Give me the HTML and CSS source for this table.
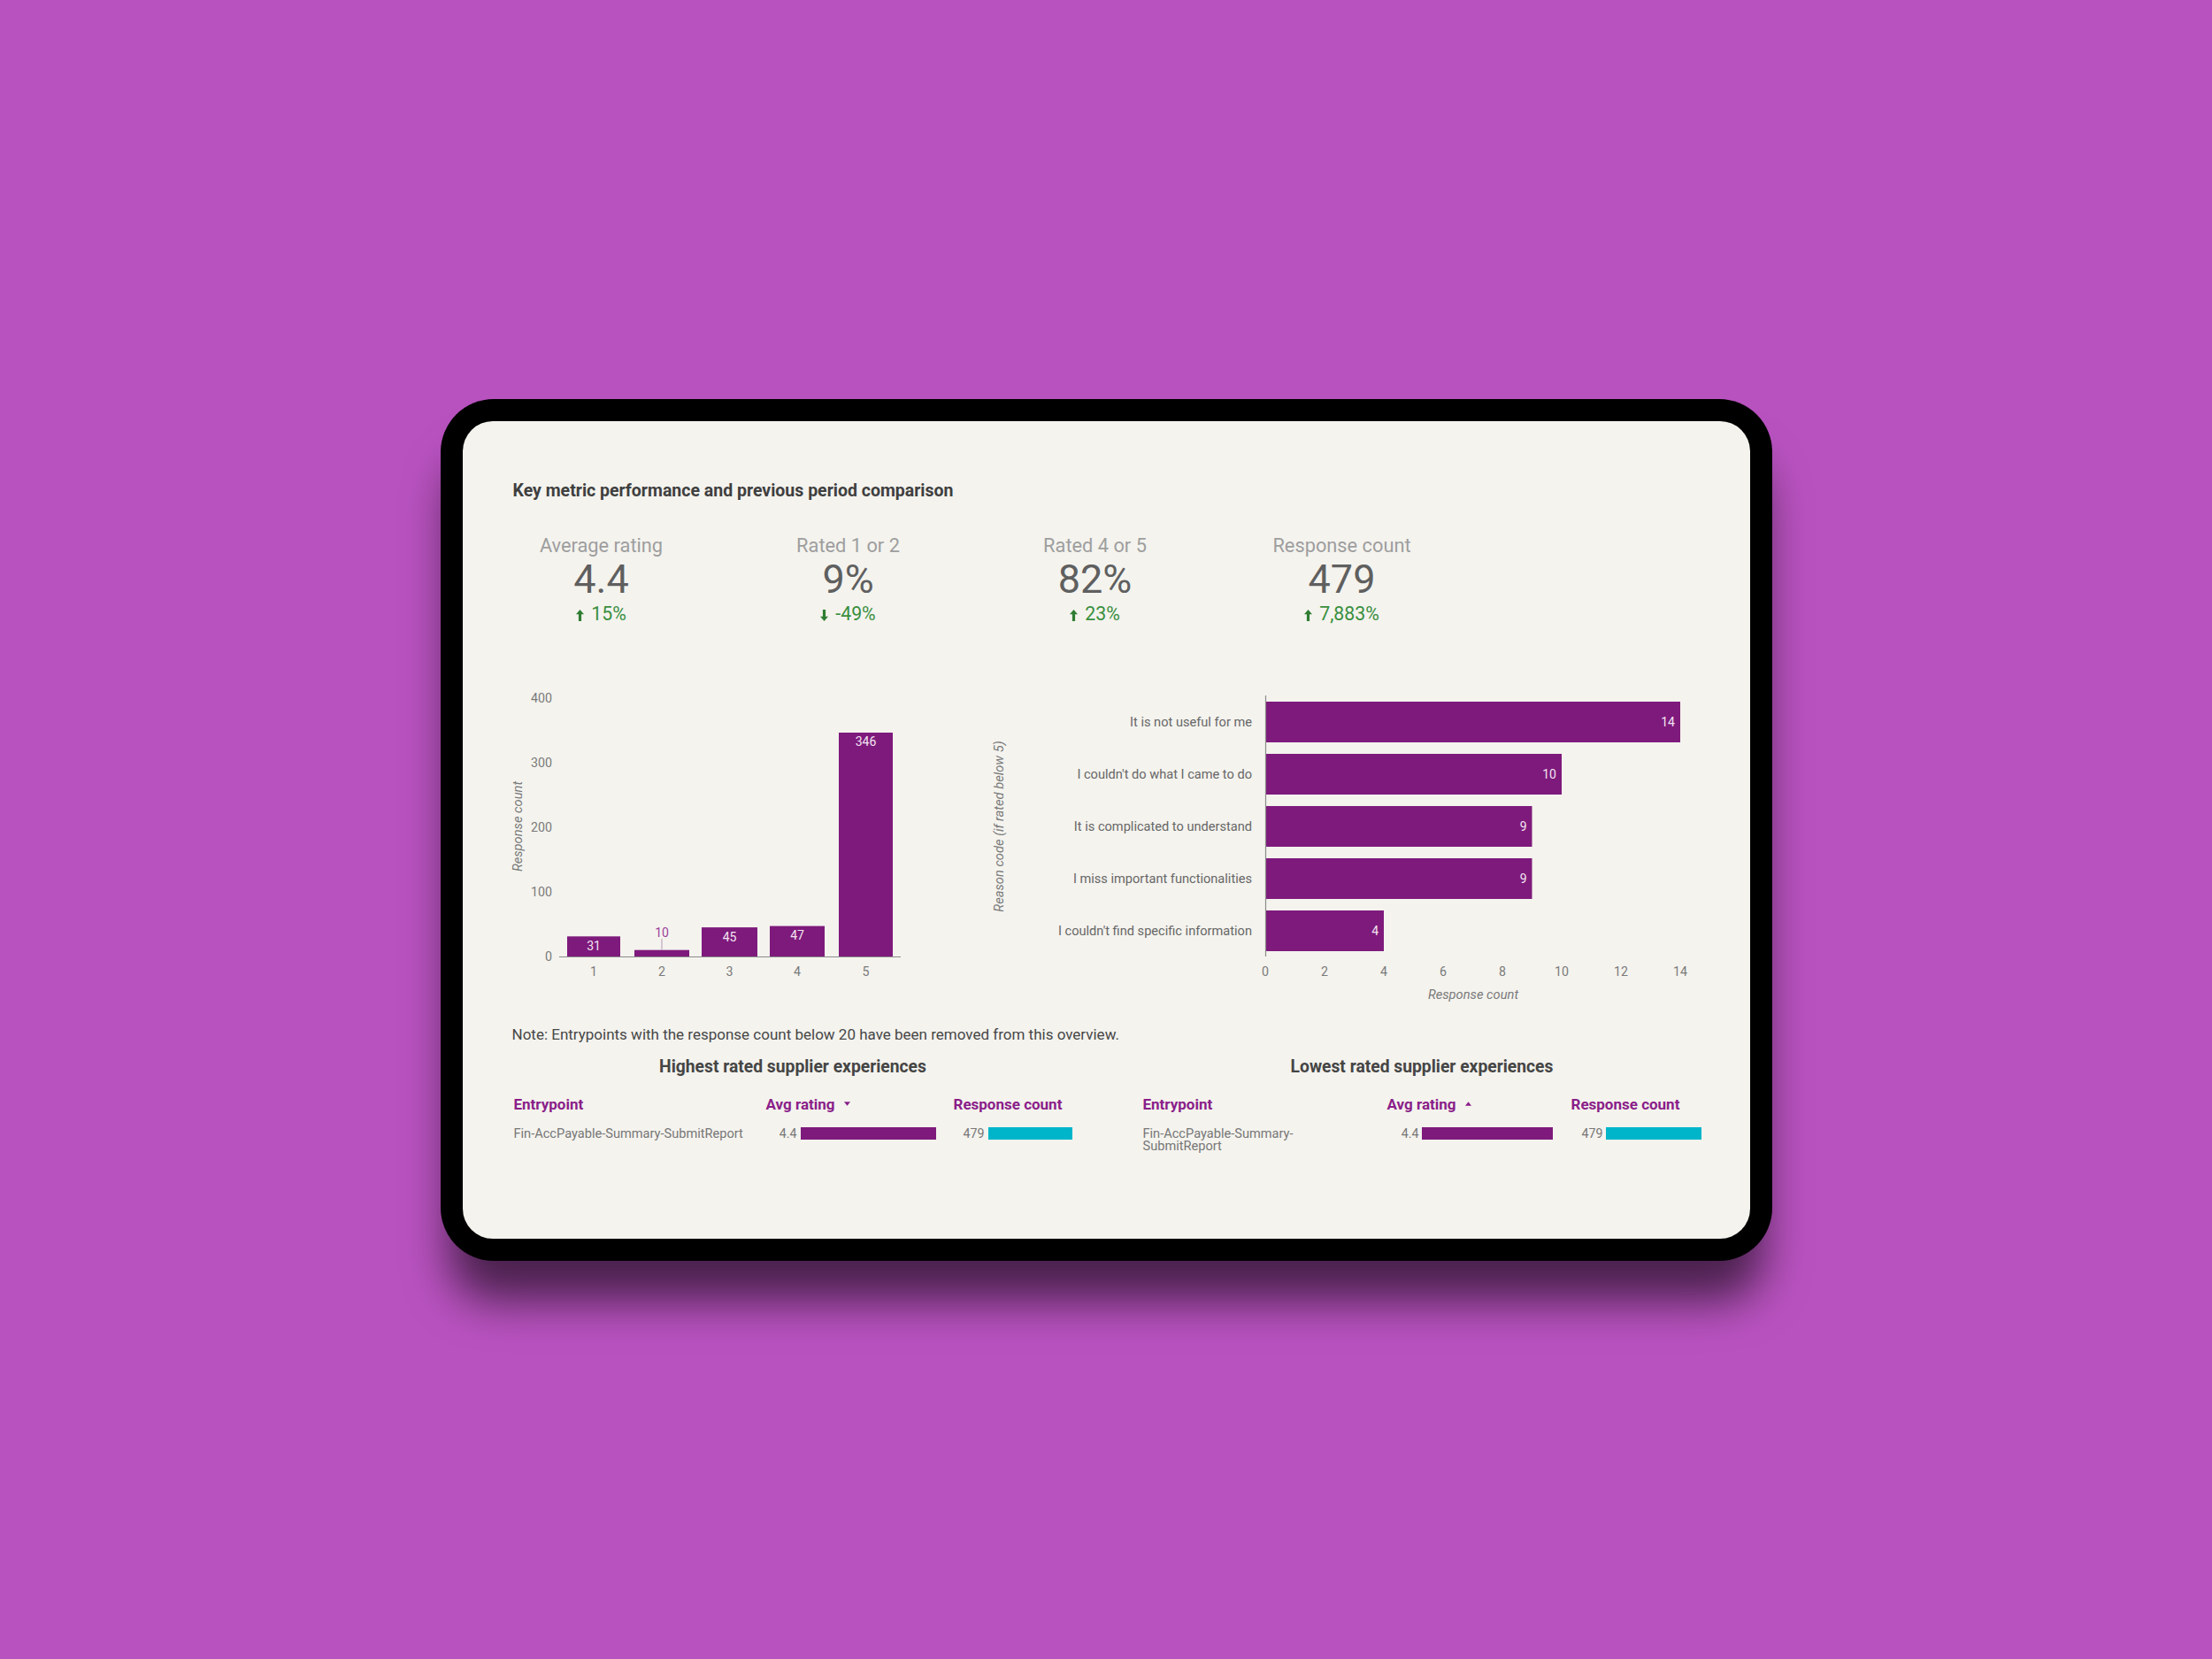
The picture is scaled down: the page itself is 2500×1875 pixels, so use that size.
FILE: index.html
```html
<!DOCTYPE html>
<html lang="en">
<head>
<meta charset="utf-8">
<title>Supplier experience dashboard</title>
<link rel="stylesheet" href="styles.css">
</head>
<body>
<div class="tablet">
  <div class="screen">
    <h1 class="title">Key metric performance and previous period comparison</h1>

    <div class="kpis">
      <div class="kpi">
        <div class="kpi-label">Average rating</div>
        <div class="kpi-value">4.4</div>
        <div class="kpi-delta"><svg class="arrow" viewBox="0 0 9 13"><path d="M4.5 0 L9 5.2 H6.1 V13 H2.9 V5.2 H0 Z"/></svg><span>15%</span></div>
      </div>
      <div class="kpi">
        <div class="kpi-label">Rated 1 or 2</div>
        <div class="kpi-value">9%</div>
        <div class="kpi-delta"><svg class="arrow" viewBox="0 0 9 13"><path d="M4.5 13 L9 7.8 H6.1 V0 H2.9 V7.8 H0 Z"/></svg><span>-49%</span></div>
      </div>
      <div class="kpi">
        <div class="kpi-label">Rated 4 or 5</div>
        <div class="kpi-value">82%</div>
        <div class="kpi-delta"><svg class="arrow" viewBox="0 0 9 13"><path d="M4.5 0 L9 5.2 H6.1 V13 H2.9 V5.2 H0 Z"/></svg><span>23%</span></div>
      </div>
      <div class="kpi">
        <div class="kpi-label">Response count</div>
        <div class="kpi-value">479</div>
        <div class="kpi-delta"><svg class="arrow" viewBox="0 0 9 13"><path d="M4.5 0 L9 5.2 H6.1 V13 H2.9 V5.2 H0 Z"/></svg><span>7,883%</span></div>
      </div>
    </div>

    <div class="charts">
      <svg class="chart chart-left" width="460" height="345" viewBox="0 0 460 345">
        <text class="axis-title" transform="translate(15,163) rotate(-90)" text-anchor="middle" dominant-baseline="central">Response count</text>
        <g class="tick" text-anchor="end" dominant-baseline="central">
          <text x="54" y="17.6">400</text>
          <text x="54" y="90.7">300</text>
          <text x="54" y="163.8">200</text>
          <text x="54" y="236.9">100</text>
          <text x="54" y="310">0</text>
        </g>
        <g class="bar">
          <rect x="71" y="287.3" width="60" height="22.7"/>
          <rect x="147" y="302.7" width="62" height="7.3"/>
          <rect x="223" y="277.1" width="63" height="32.9"/>
          <rect x="300" y="275.6" width="62" height="34.4"/>
          <rect x="378" y="57" width="61" height="253"/>
        </g>
        <line class="axis-line" x1="62" y1="310.5" x2="448" y2="310.5"/>
        <line class="leader" x1="178" y1="290" x2="178" y2="302.7"/>
        <g class="bar-value" text-anchor="middle" dominant-baseline="central">
          <text x="101" y="297.5">31</text>
          <text x="254.5" y="287.5">45</text>
          <text x="331" y="286">47</text>
          <text x="408.5" y="66.5">346</text>
        </g>
        <text class="bar-value-out" x="178" y="283" text-anchor="middle" dominant-baseline="central">10</text>
        <g class="tick" text-anchor="middle" dominant-baseline="central">
          <text x="101" y="327">1</text>
          <text x="178" y="327">2</text>
          <text x="254.5" y="327">3</text>
          <text x="331" y="327">4</text>
          <text x="408.5" y="327">5</text>
        </g>
      </svg>

      <svg class="chart chart-right" width="810" height="365" viewBox="0 0 810 365">
        <text class="axis-title" transform="translate(19,163) rotate(-90)" text-anchor="middle" dominant-baseline="central">Reason code (if rated below 5)</text>
        <g class="category" text-anchor="end" dominant-baseline="central">
          <text x="305" y="45">It is not useful for me</text>
          <text x="305" y="104">I couldn't do what I came to do</text>
          <text x="305" y="163">It is complicated to understand</text>
          <text x="305" y="222">I miss important functionalities</text>
          <text x="305" y="281">I couldn't find specific information</text>
        </g>
        <g class="bar">
          <rect x="321" y="22" width="468" height="46"/>
          <rect x="321" y="81" width="334" height="46"/>
          <rect x="321" y="140" width="300.5" height="46"/>
          <rect x="321" y="199" width="300.5" height="46"/>
          <rect x="321" y="258" width="133" height="46"/>
        </g>
        <line class="axis-line" x1="320.5" y1="15" x2="320.5" y2="310"/>
        <g class="bar-value" text-anchor="end" dominant-baseline="central">
          <text x="783" y="45">14</text>
          <text x="649" y="104">10</text>
          <text x="615.5" y="163">9</text>
          <text x="615.5" y="222">9</text>
          <text x="448" y="281">4</text>
        </g>
        <g class="tick" text-anchor="middle" dominant-baseline="central">
          <text x="320" y="327">0</text>
          <text x="387" y="327">2</text>
          <text x="454" y="327">4</text>
          <text x="521" y="327">6</text>
          <text x="588" y="327">8</text>
          <text x="655" y="327">10</text>
          <text x="722" y="327">12</text>
          <text x="789" y="327">14</text>
        </g>
        <text class="axis-title" x="555" y="353" text-anchor="middle" dominant-baseline="central">Response count</text>
      </svg>
    </div>

    <p class="note">Note: Entrypoints with the response count below 20 have been removed from this overview.</p>

    <div class="tables">
      <section class="table-block">
        <h2 class="table-title">Highest rated supplier experiences</h2>
        <div class="table table-high">
          <div class="th">Entrypoint</div>
          <div class="th">Avg rating<svg class="caret" viewBox="0 0 8 5"><path d="M0 0 H8 L4 5 Z"/></svg></div>
          <div class="th">Response count</div>
          <div class="td entry">Fin-AccPayable-Summary-SubmitReport</div>
          <div class="td metric"><span class="num">4.4</span><span class="bar-fill purple" style="width:153px"></span></div>
          <div class="td metric"><span class="num">479</span><span class="bar-fill cyan" style="width:95px"></span></div>
        </div>
      </section>
      <section class="table-block">
        <h2 class="table-title">Lowest rated supplier experiences</h2>
        <div class="table table-low">
          <div class="th">Entrypoint</div>
          <div class="th">Avg rating<svg class="caret" viewBox="0 0 8 5"><path d="M0 5 H8 L4 0 Z"/></svg></div>
          <div class="th">Response count</div>
          <div class="td entry">Fin-AccPayable-Summary-SubmitReport</div>
          <div class="td metric"><span class="num">4.4</span><span class="bar-fill purple" style="width:148px"></span></div>
          <div class="td metric"><span class="num">479</span><span class="bar-fill cyan" style="width:108px"></span></div>
        </div>
      </section>
    </div>
  </div>
</div>
</body>
</html>
```

FILE: styles.css
```css
* { box-sizing: border-box; }

html, body {
  margin: 0;
  padding: 0;
}

body {
  width: 2500px;
  height: 1875px;
  background: #b852bf;
  display: flex;
  align-items: center;
  justify-content: center;
  font-family: Roboto, "Noto Sans", sans-serif;
}

.tablet {
  width: 1505px;
  height: 974px;
  background: #000;
  border-radius: 60px;
  padding: 25px;
  box-shadow: 0 55px 50px -10px rgba(0, 0, 0, 0.6);
}

.screen {
  width: 1455px;
  height: 924px;
  background: #f4f3ee;
  border-radius: 34px;
  overflow: hidden;
  padding-top: 67px;
}

.title {
  margin: 0 0 0 57px;
  font-size: 19.5px;
  line-height: 24px;
  font-weight: 700;
  color: #3f3f3f;
}

/* KPI scorecards */
.kpis {
  display: flex;
  margin-top: 36px;
  padding-left: 17.5px;
}

.kpi {
  width: 279px;
  display: flex;
  flex-direction: column;
  align-items: center;
}

.kpi-label {
  font-size: 21.8px;
  line-height: 28px;
  color: #9e9e9e;
}

.kpi-value {
  margin-top: 1px;
  font-size: 45px;
  line-height: 46px;
  color: #5f5f5f;
}

.kpi-delta {
  margin-top: 4px;
  display: flex;
  align-items: center;
  gap: 8px;
  font-size: 21.3px;
  line-height: 24px;
  color: #3a8f3e;
}

.arrow {
  width: 9px;
  height: 13px;
  fill: #2f7d33;
  margin-top: 3px;
}

/* Charts */
.charts {
  display: flex;
  gap: 80px;
  margin-top: 65px;
  padding-left: 47px;
  align-items: flex-start;
}

.chart {
  display: block;
  font-family: Roboto, "Noto Sans", sans-serif;
}

.chart .tick {
  font-size: 14.2px;
  fill: #7a7a7a;
}

.chart .axis-title {
  font-size: 14.7px;
  font-style: italic;
  fill: #7a7a7a;
}

.chart .category {
  font-size: 14.6px;
  fill: #676767;
}

.chart .bar {
  fill: #7e1a7c;
}

.chart .axis-line {
  stroke: #8c8c8c;
  stroke-width: 1.2;
}

.chart .leader {
  stroke: #b89ab8;
  stroke-width: 1;
}

.chart .bar-value {
  font-size: 14px;
  fill: #f3e4f2;
}

.chart .bar-value-out {
  font-size: 14px;
  fill: #9c3e9b;
}

/* Note */
.note {
  margin: 22px 0 0 56px;
  font-size: 17px;
  line-height: 22px;
  color: #474747;
}

/* Tables */
.tables {
  display: flex;
  gap: 80px;
  margin-top: 14px;
  padding-left: 58px;
}

.table-block {
  width: 631px;
}

.table-title {
  margin: 0;
  text-align: center;
  font-size: 19.3px;
  line-height: 24px;
  font-weight: 700;
  color: #454545;
}

.table {
  display: grid;
  margin-top: 20px;
  row-gap: 16px;
  align-items: start;
}

.table-high {
  grid-template-columns: 285px 212px 134px;
}

.table-low {
  grid-template-columns: 276px 208px 147px;
}

.th {
  display: flex;
  align-items: center;
  font-size: 17px;
  line-height: 20px;
  font-weight: 700;
  color: #8a1e89;
}

.caret {
  width: 7px;
  height: 5px;
  margin-left: 11px;
  fill: #8a1e89;
}

.td {
  font-size: 14.6px;
  line-height: 14px;
  color: #777;
}

.table-low .entry {
  width: 230px;
}

.metric {
  display: flex;
  align-items: flex-start;
  gap: 4px;
}

.table-low .metric {
  gap: 3px;
}

.num {
  width: 35px;
  text-align: right;
  font-size: 14.2px;
  line-height: 14px;
  color: #777;
}

.table-low .num {
  width: 36px;
}

.bar-fill {
  display: block;
  height: 14px;
}

.bar-fill.purple {
  background: #7e1a7c;
}

.bar-fill.cyan {
  background: #00b5c9;
}
```
